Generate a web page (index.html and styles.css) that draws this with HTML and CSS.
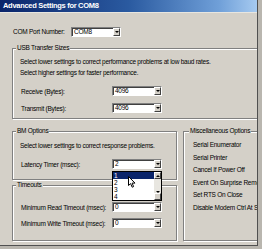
FILE: index.html
```html
<!DOCTYPE html>
<html lang="en">
<head>
    <meta charset="UTF-8">
    <title>Advanced Settings for COM8</title>
    <link rel="stylesheet" href="styles.css">
</head>
<body>
    <div class="window">
        <div class="title">Advanced Settings for COM8</div>
        <div class="content">
            <div class="port-row">
                <span class="port-label">COM Port Number:</span>
                <div class="combo port-combo"><span>COM8</span><i class="drop"></i></div>
            </div>

            <fieldset class="group usb">
                <legend>USB Transfer Sizes</legend>
                <p class="first">Select lower settings to correct performance problems at low baud rates.</p>
                <p>Select higher settings for faster performance.</p>
                <div class="row rx"><span class="lbl">Receive (Bytes):</span><div class="combo"><span>4096</span><i class="drop"></i></div></div>
                <div class="row tx"><span class="lbl">Transmit (Bytes):</span><div class="combo"><span>4096</span><i class="drop"></i></div></div>
            </fieldset>

            <div class="cols">
                <div class="left-col">
                    <fieldset class="group bm">
                        <legend>BM Options</legend>
                        <p class="first">Select lower settings to correct response problems.</p>
                        <div class="row latency"><span class="lbl">Latency Timer (msec):</span><div class="combo"><span>2</span><i class="drop"></i></div></div>
                    </fieldset>
                    <fieldset class="group timeouts">
                        <legend>Timeouts</legend>
                        <div class="row rd"><span class="lbl">Minimum Read Timeout (msec):</span><div class="combo"><span>0</span><i class="drop"></i></div></div>
                        <div class="row wr"><span class="lbl">Minimum Write Timeout (msec):</span><div class="combo"><span>0</span><i class="drop"></i></div></div>
                    </fieldset>
                </div>
                <fieldset class="group misc">
                    <legend>Miscellaneous Options</legend>
                    <ul>
                        <li>Serial Enumerator</li>
                        <li>Serial Printer</li>
                        <li>Cancel If Power Off</li>
                        <li>Event On Surprise Removal</li>
                        <li>Set RTS On Close</li>
                        <li>Disable Modem Ctrl At Startup</li>
                    </ul>
                </fieldset>
            </div>
        </div>

        <!-- open list of the latency combo -->
        <div class="droplist">
            <ul>
                <li class="sel">1</li>
                <li>2</li>
                <li>3</li>
                <li>4</li>
            </ul>
            <div class="scroll">
                <div class="sbtn"><i class="up"></i></div>
                <div class="sbtn"><i class="down"></i></div>
            </div>
        </div>
        <svg class="cursor" width="8" height="12" viewBox="0 0 8 12">
            <path d="M0.5 0.5 L0.5 9.5 L2.6 7.6 L4.2 11.2 L5.6 10.6 L4.1 7.1 L7 7.1 Z" fill="#fff" stroke="#000" stroke-width="1"/>
        </svg>
    </div>
</body>
</html>
```

FILE: styles.css
```css
body{
    margin:0;
    background:#b9b6af;
    font-family:"Liberation Sans", Arial, sans-serif;
    font-size:6.5px;
    letter-spacing:-0.25px;
    color:#000;
}
.window{
    position:relative;
    width:257px;
    height:245px;
    background:#d4d0c8;
    border-right:1px solid #505050;
    border-bottom:1px solid #505050;
    overflow:hidden;
}
.title{
    height:12px;
    line-height:12px;
    padding-left:3px;
    color:#fff;
    font-weight:bold;
    font-size:7.5px;
    letter-spacing:-0.3px;
    background:linear-gradient(to right, #0a246a 0%, #2a5aa0 50%, #6f9fd8 85%, #a6caf0 100%);
    border-bottom:1px solid #e8e6e0;
}
.content{
    padding-left:12px;
}

.port-row{display:flex;align-items:center;height:9px;margin-top:14px}
.port-label{width:58px;padding-left:1px}
.port-combo{width:49px}

.combo{
    position:relative;
    box-sizing:border-box;
    height:10px;
    width:50px;
    background:#fff;
    border-top:1px solid #808080;
    border-left:1px solid #808080;
    border-right:1px solid #fff;
    border-bottom:1px solid #fff;
    box-shadow:inset 1px 1px 0 #404040;
    display:flex;
    align-items:center;
    padding-left:2px;
    line-height:8px;
}
.combo span{flex:1}
.drop{
    box-sizing:border-box;
    width:7px;
    height:8px;
    background:#d4d0c8;
    border-top:1px solid #fff;
    border-left:1px solid #fff;
    border-right:1px solid #404040;
    border-bottom:1px solid #404040;
    display:flex;
    align-items:center;
    justify-content:center;
}
.drop::after, .down::after{
    content:"";
    border-left:2px solid transparent;
    border-right:2px solid transparent;
    border-top:2px solid #000;
}
.up::after{
    content:"";
    display:block;
    border-left:2px solid transparent;
    border-right:2px solid transparent;
    border-bottom:2px solid #000;
}

.group{
    margin:0;
    padding:0 0 0 7px;
    border:1px solid #808080;
    box-shadow:inset 1px 1px 0 #fff, 1px 1px 0 #fff;
    min-width:0;
}
.group legend{
    margin-left:-4px;
    padding:0 1px;
    line-height:8px;
    background:#d4d0c8;
}
.group p{margin:0;line-height:11px}
.group p.first{margin-top:4px}

.usb{margin:8px -10px 0 0;padding-bottom:5px}
.row{display:flex;align-items:center;height:10px}
.lbl{width:91px;padding-left:1px}
.rx{margin-top:8px}
.tx{margin-top:7px}

.cols{display:flex;margin-top:8px}
.left-col{width:165px;flex:none}
.bm{padding-bottom:10px}
.bm p.first{margin-top:5px}
.latency{margin-top:8px}
.timeouts{margin-top:1px;padding-bottom:12px}
.rd{margin-top:13px}
.wr{margin-top:6px}

.misc{flex:1;margin-left:6px;margin-right:-10px;padding-left:9px}
.misc ul{list-style:none;margin:4px 0 0;padding:0}
.misc li{line-height:12.6px;white-space:nowrap}

.droplist{
    position:absolute;
    left:112px;
    top:171px;
    width:50px;
    height:30px;
    box-sizing:border-box;
    border:1px solid #000;
    background:#fff;
    display:flex;
}
.droplist ul{flex:1;list-style:none;margin:0;padding:0}
.droplist li{line-height:7px;padding-left:1px}
.droplist li.sel{background:#0a246a;color:#fff}
.scroll{
    width:7px;
    background:#e8e6e0;
    display:flex;
    flex-direction:column;
    justify-content:space-between;
}
.sbtn{
    box-sizing:border-box;
    height:7px;
    background:#d4d0c8;
    border-top:1px solid #fff;
    border-left:1px solid #fff;
    border-right:1px solid #404040;
    border-bottom:1px solid #404040;
    display:flex;
    align-items:center;
    justify-content:center;
}
.cursor{
    position:absolute;
    left:128px;
    top:176px;
}
```
